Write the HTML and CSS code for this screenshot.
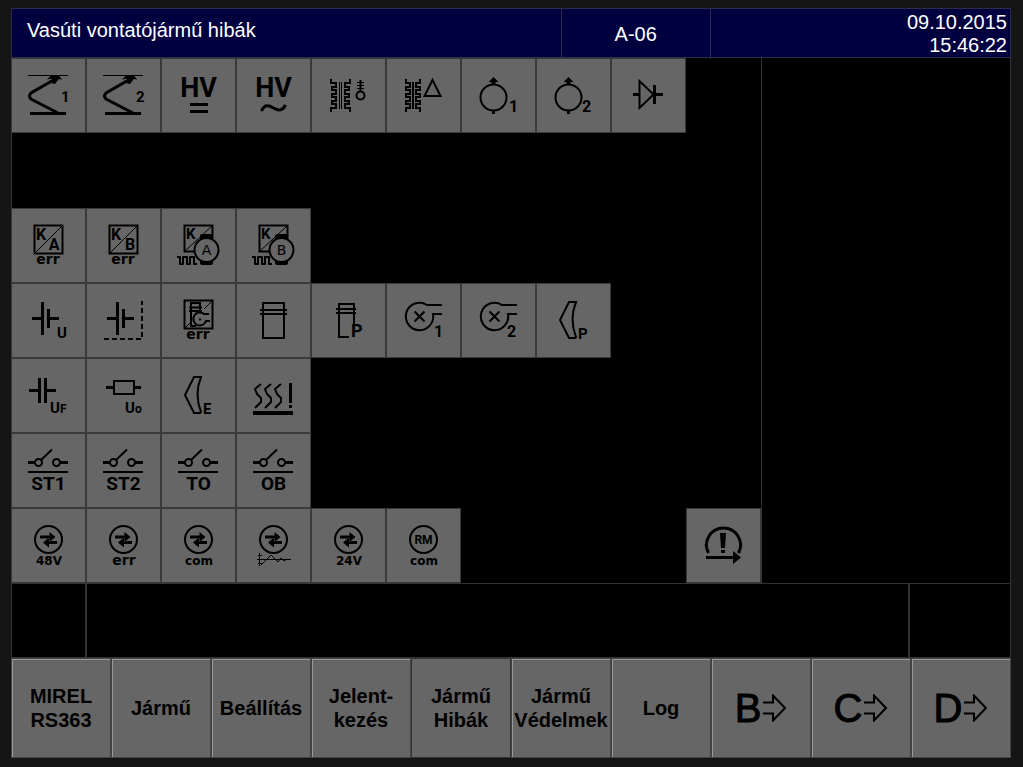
FILE: index.html
```html
<!DOCTYPE html>
<html lang="hu">
<head>
    <meta charset="UTF-8">
    <meta name="viewport" content="width=device-width, initial-scale=1.0">
    <title>Vasúti vontatójármű hibák</title>
    <link rel="stylesheet" href="styles.css">
</head>
<body>
    <!-- Shapes used by more than one tile -->
    <svg class="defs" aria-hidden="true">
        <symbol id="pantograph" viewBox="0 0 75 75">
            <path class="thin" d="M17 17.5h40"/>
            <path class="w3" d="M46 20L20 35q-3 3 0 6L47 55M19 55.5h36"/>
            <path class="fill" d="M36 22q3-5 8-5 5 0 7 5-3-2-4 0l-3 4-4-1 2-4q-3-1-6 1z"/>
        </symbol>
        <symbol id="motor" viewBox="0 0 75 75">
            <circle cx="32.5" cy="39.5" r="13"/>
            <path class="fill" d="M32.5 19l5 5h-3v3h-4v-3h-3zM31 52h3v4h-3z"/>
        </symbol>
        <symbol id="box-k" viewBox="0 0 75 75">
            <path d="M23.5 17.5h28v28h-28z"/>
            <path class="thin" d="M24 45l27-27"/>
        </symbol>
        <symbol id="motor-k" viewBox="0 0 75 75">
            <path d="M23.5 17.5h28v26h-28z"/>
            <path class="thin" d="M24 43l27-25"/>
            <path class="round" d="M16 49h3v7h3v-7h4v7h3v-7h4v7h3"/>
            <rect class="fill" x="39" y="26" width="13" height="31" rx="2"/>
            <circle class="cover" cx="45.5" cy="42" r="12"/>
        </symbol>
        <symbol id="battery" viewBox="0 0 75 75">
            <path class="w3" d="M21 35.5h10M31.5 19v33M37.5 26v19M38 35.5h10"/>
        </symbol>
        <symbol id="blower" viewBox="0 0 75 75">
            <path d="M56 22H41A13.7 13.7 0 1 0 47 31H56M28.5 28.5l10 10M38.5 28.5l-10 10"/>
        </symbol>
        <symbol id="wiper" viewBox="0 0 75 75">
            <path d="M33 19h7q-7 17 0 35l-1 1h-6L24 37z"/>
        </symbol>
        <symbol id="switch" viewBox="0 0 75 75">
            <circle cx="27.5" cy="29.5" r="3.5"/>
            <circle cx="45.5" cy="29.5" r="3.5"/>
            <path class="w3" d="M17 29.5h7M49 29.5h8"/>
            <path d="M30 27l11-10.500M17 39h40"/>
        </symbol>
        <symbol id="exchange" viewBox="0 0 75 75">
            <circle cx="37.5" cy="31.500" r="13.500"/>
            <path class="fill" d="M29 27.500h9.500V24l6 5-6 5v-3.500H29zM46 33h-8v-3.500l-6 5 6 5V36h8z"/>
        </symbol>
    </svg>

    <div class="screen">
        <header class="top-bar">
            <div class="page-title">Vasúti vontatójármű hibák</div>
            <div class="page-code">A-06</div>
            <div class="clock">09.10.2015<br>15:46:22</div>
        </header>

        <main class="main">
            <div class="faults">
                <div class="fault-row">
                    <div class="tile"><svg viewBox="0 0 75 75"><use href="#pantograph"/><text x="50" y="44" class="t15">1</text></svg></div>
                    <div class="tile"><svg viewBox="0 0 75 75"><use href="#pantograph"/><text x="50" y="44" class="t15">2</text></svg></div>
                    <div class="tile"><svg viewBox="0 0 75 75"><text x="37.5" y="39" class="t27 mid">HV</text><path class="w3" d="M29 46.500h18M29 53.500h18"/></svg></div>
                    <div class="tile"><svg viewBox="0 0 75 75"><text x="37.5" y="39" class="t27 mid">HV</text><path class="w3" d="M25.500 53c3-7 7-6 12-3s9 3 12-3"/></svg></div>
                    <div class="tile">
                        <svg viewBox="0 0 75 75">
                            <path d="M20 21v4h5v4h-4v3h4v4h-4v3h4v4h-4v3h4v4h-5v4M39 21v4h-5v4h4v3h-4v4h4v3h-4v4h4v3h-4v4h5v4"/>
                            <path class="thin" d="M28.500 24v27M30.500 24v27"/>
                            <circle cx="49.500" cy="37.500" r="4"/>
                            <path d="M49.500 22v11"/>
                            <path class="thin" d="M46 24.500h7M46 27.500h7M46 30.500h7"/>
                        </svg>
                    </div>
                    <div class="tile">
                        <svg viewBox="0 0 75 75">
                            <path d="M20 21v4h4v4h-4v3h4v4h-4v3h4v4h-4v3h4v4h-4v4M34 21v4h-4v4h4v3h-4v4h4v3h-4v4h4v3h-4v4h4v4"/>
                            <path d="M27 24v27"/>
                            <path d="M46.500 22l8 16h-16z"/>
                        </svg>
                    </div>
                    <div class="tile"><svg viewBox="0 0 75 75"><use href="#motor"/><text x="48" y="54" class="t16">1</text></svg></div>
                    <div class="tile"><svg viewBox="0 0 75 75"><use href="#motor"/><text x="46" y="54" class="t16">2</text></svg></div>
                    <div class="tile"><svg viewBox="0 0 75 75"><path d="M28.500 23v27l14-13.500z"/><path class="w3" d="M22 36.500h6M44 36.500h8M43.500 27v19"/></svg></div>
                </div>

                <div class="fault-row"></div>

                <div class="fault-row">
                    <div class="tile"><svg viewBox="0 0 75 75"><use href="#box-k"/><text x="25" y="32" class="t16">K</text><text x="43" y="42" class="t16 mid">A</text><text x="37" y="56" class="wide t14 mid">err</text></svg></div>
                    <div class="tile"><svg viewBox="0 0 75 75"><use href="#box-k"/><text x="25" y="32" class="t16">K</text><text x="44" y="42" class="t16 mid">B</text><text x="37" y="56" class="wide t14 mid">err</text></svg></div>
                    <div class="tile"><svg viewBox="0 0 75 75"><use href="#motor-k"/><text x="25" y="31" class="t15">K</text><text x="45.500" y="47" class="wide t14 normal mid">A</text></svg></div>
                    <div class="tile"><svg viewBox="0 0 75 75"><use href="#motor-k"/><text x="25" y="31" class="t15">K</text><text x="45.500" y="47" class="wide t14 normal mid">B</text></svg></div>
                </div>

                <div class="fault-row">
                    <div class="tile"><svg viewBox="0 0 75 75"><use href="#battery"/><text x="46" y="55" class="t15">U</text></svg></div>
                    <div class="tile"><svg viewBox="0 0 75 75"><use href="#battery"/><path class="dash" d="M18 56h38V18"/></svg></div>
                    <div class="tile">
                        <svg viewBox="0 0 75 75">
                            <path d="M23.500 17.500h28v28h-28z"/>
                            <path class="thin" d="M24 45l5-5M43 26l8-8"/>
                            <path d="M35 43h-5V20h9v9M28 24.500h13M28 28h13M48 31h-5a6.500 6.500 0 1 0 2 7h4"/>
                            <path class="fill" d="M38 35.500h2v2h-2z"/>
                            <text x="37" y="56" class="wide t14 mid">err</text>
                        </svg>
                    </div>
                    <div class="tile"><svg viewBox="0 0 75 75"><path d="M27 20h21v35H27zM24 27h27M24 31h27"/></svg></div>
                    <div class="tile"><svg viewBox="0 0 75 75"><path d="M38 54H28V21h15v20M25 26h20M25 30h20"/><text x="40" y="54" class="t18">P</text></svg></div>
                    <div class="tile"><svg viewBox="0 0 75 75"><use href="#blower"/><text x="48" y="54" class="t16">1</text></svg></div>
                    <div class="tile"><svg viewBox="0 0 75 75"><use href="#blower"/><text x="46" y="54" class="t16">2</text></svg></div>
                    <div class="tile"><svg viewBox="0 0 75 75"><use href="#wiper"/><text x="42" y="56" class="t15">P</text></svg></div>
                </div>

                <div class="fault-row">
                    <div class="tile"><svg viewBox="0 0 75 75"><path class="w3" d="M18 32.500h10M28.500 20v25M34.500 20v25M35 32.500h10"/><text x="39" y="55" class="t15">U<tspan class="t12">F</tspan></text></svg></div>
                    <div class="tile"><svg viewBox="0 0 75 75"><path d="M28 23h20v13H28z"/><path class="w3" d="M20 29.500h7M48 29.500h7"/><text x="39" y="55" class="t15">U<tspan class="t12">o</tspan></text></svg></div>
                    <div class="tile"><svg viewBox="0 0 75 75"><use href="#wiper"/><text x="42" y="56" class="t15">E</text></svg></div>
                    <div class="tile">
                        <svg viewBox="0 0 75 75">
                            <path class="round heat" d="M25 26l-6 5 2 5 4 4v4l-6 6M35 26l-6 5 2 5 4 4v4l-6 6M45 26l-6 5 2 5 4 4v4l-6 6"/>
                            <path class="w3" d="M54.500 25v20M54.500 47v3"/>
                            <path class="fill" d="M17 53h40v4H17z"/>
                        </svg>
                    </div>
                </div>

                <div class="fault-row">
                    <div class="tile"><svg viewBox="0 0 75 75"><use href="#switch"/><text x="37.500" y="57" class="t19 mid">ST1</text></svg></div>
                    <div class="tile"><svg viewBox="0 0 75 75"><use href="#switch"/><text x="37.500" y="57" class="t19 mid">ST2</text></svg></div>
                    <div class="tile"><svg viewBox="0 0 75 75"><use href="#switch"/><text x="37.500" y="57" class="t19 mid">TO</text></svg></div>
                    <div class="tile"><svg viewBox="0 0 75 75"><use href="#switch"/><text x="37.500" y="57" class="t19 mid">OB</text></svg></div>
                </div>

                <div class="fault-row">
                    <div class="tile"><svg viewBox="0 0 75 75"><use href="#exchange"/><text x="38" y="57" class="wide t12 mid">48V</text></svg></div>
                    <div class="tile"><svg viewBox="0 0 75 75"><use href="#exchange"/><text x="38" y="57" class="wide t14 mid">err</text></svg></div>
                    <div class="tile"><svg viewBox="0 0 75 75"><use href="#exchange"/><text x="38" y="57" class="wide t12 mid">com</text></svg></div>
                    <div class="tile">
                        <svg viewBox="0 0 75 75">
                            <use href="#exchange"/>
                            <path class="thin" d="M23.500 45v13M22 47.500h4M22 55.500h4M21 51.500h34M25 57l10-10 7 7 3-4 3 3 3-2"/>
                        </svg>
                    </div>
                    <div class="tile"><svg viewBox="0 0 75 75"><use href="#exchange"/><text x="38" y="57" class="wide t12 mid">24V</text></svg></div>
                    <div class="tile"><svg viewBox="0 0 75 75"><circle cx="37.500" cy="31.500" r="13.500"/><text x="37.500" y="36" class="t12 mid">RM</text><text x="38" y="57" class="wide t12 mid">com</text></svg></div>
                    <div class="tile tile-last">
                        <svg viewBox="0 0 75 75">
                            <path class="w3" d="M22.500 45a17 17 0 1 1 30 0M20 49.500h28"/>
                            <path class="fill" d="M34 25h6l-1 15h-4zM35 42h4v3h-4zM47 43l8 6.500-8 6.500z"/>
                        </svg>
                    </div>
                </div>
            </div>
            <aside class="side-panel"></aside>
        </main>

        <div class="message-bar">
            <div></div>
            <div></div>
            <div></div>
        </div>

        <nav class="menu">
            <button type="button">MIREL<br>RS363</button>
            <button type="button">Jármű</button>
            <button type="button">Beállítás</button>
            <button type="button">Jelent-<br>kezés</button>
            <button type="button" class="active">Jármű<br>Hibák</button>
            <button type="button">Jármű<br>Védelmek</button>
            <button type="button">Log</button>
            <button type="button" class="jump">B<svg viewBox="0 0 26 28"><path d="M2 8.500h10v-7l12 12.500-12 12.500v-7H2"/></svg></button>
            <button type="button" class="jump">C<svg viewBox="0 0 26 28"><path d="M2 8.500h10v-7l12 12.500-12 12.500v-7H2"/></svg></button>
            <button type="button" class="jump">D<svg viewBox="0 0 26 28"><path d="M2 8.500h10v-7l12 12.500-12 12.500v-7H2"/></svg></button>
        </nav>
    </div>
</body>
</html>
```
FILE: styles.css
```css
* {
    margin: 0;
    padding: 0;
    box-sizing: border-box;
}

body {
    min-height: 100vh;
    padding: 8px 12px 9px 11px;
    background: #151515;
    color: black;
    font-family: "Liberation Sans", Arial, sans-serif;
    display: flex;
    flex-direction: column;
}

.defs {
    position: absolute;
    width: 0;
    height: 0;
}

.screen {
    flex: 1;
    display: flex;
    flex-direction: column;
    background: black;
}

/* header */
.top-bar {
    display: grid;
    grid-template-columns: 11fr 3fr 6fr;
    height: 50px;
    background: #00003f;
    color: white;
    font-size: 20px;
    line-height: 23px;
    border: 1px solid #2c2c4c;
}

.page-title {
    padding: 10px 15px;
}

.page-code {
    display: flex;
    justify-content: center;
    align-items: center;
    border-left: 1px solid #2c2c4c;
    border-right: 1px solid #2c2c4c;
}

.clock {
    padding: 2px 3px;
    text-align: right;
}

/* fault tiles */
.main {
    flex: 1;
    display: grid;
    grid-template-columns: 3fr 1fr;
}

.faults {
    display: grid;
    grid-template-rows: repeat(7, minmax(75px, 1fr));
    border-left: 1px solid #333;
}

.fault-row {
    display: grid;
    grid-template-columns: repeat(10, minmax(0, 1fr));
    margin-left: -1px;
}

.side-panel {
    border-left: 1px solid #333;
    border-right: 1px solid #333;
}

.tile {
    display: flex;
    justify-content: center;
    align-items: center;
    background: #666;
    border: 1px solid #3a3a3a;
}

.tile-last {
    grid-column: 10;
}

/* the drawing box runs under the tile border */
.tile svg {
    flex: none;
    width: 75px;
    height: 75px;
    margin: -1px;
}

svg {
    fill: none;
    stroke: black;
    stroke-width: 2;
}

.thin {
    stroke-width: 1;
}

.w3 {
    stroke-width: 3;
}

.fill {
    fill: black;
    stroke: none;
}

.cover {
    fill: #666;
}

.round {
    stroke-linejoin: round;
}

.dash {
    stroke-dasharray: 5 3;
}

svg text {
    fill: black;
    stroke: none;
    font-family: Roboto, sans-serif;
    font-weight: bold;
}

svg .wide {
    font-family: "DejaVu Sans", sans-serif;
}

svg .normal {
    font-weight: normal;
}

.mid {
    text-anchor: middle;
}

.t12 { font-size: 12px; }
.t14 { font-size: 14px; }
.t15 { font-size: 15px; }
.t16 { font-size: 16px; }
.t18 { font-size: 18px; }
.t19 { font-size: 19px; }
.t27 { font-size: 27px; }

/* empty message line above the menu */
.message-bar {
    display: grid;
    grid-template-columns: 3fr 33fr 4fr;
    height: 75px;
    border: 1px solid #333;
}

.message-bar div:not(:last-child) {
    border-right: 2px solid #333;
}

/* bottom menu */
.menu {
    display: grid;
    grid-template-columns: repeat(10, minmax(0, 1fr));
    height: 100px;
}

.menu button {
    display: flex;
    justify-content: center;
    align-items: center;
    background: #666;
    border: 1px solid #444;
    box-shadow: inset 1px 1px #999;
    color: black;
    font: bold 20px/24px "Liberation Sans", Arial, sans-serif;
    text-align: center;
    white-space: nowrap;
    cursor: pointer;
}

.menu .active {
    border-color: #333;
    box-shadow: none;
}

.menu .jump {
    font-size: 40px;
    font-weight: normal;
    -webkit-text-stroke: 1px black;
}

.jump svg {
    width: 26px;
    height: 28px;
}
```
